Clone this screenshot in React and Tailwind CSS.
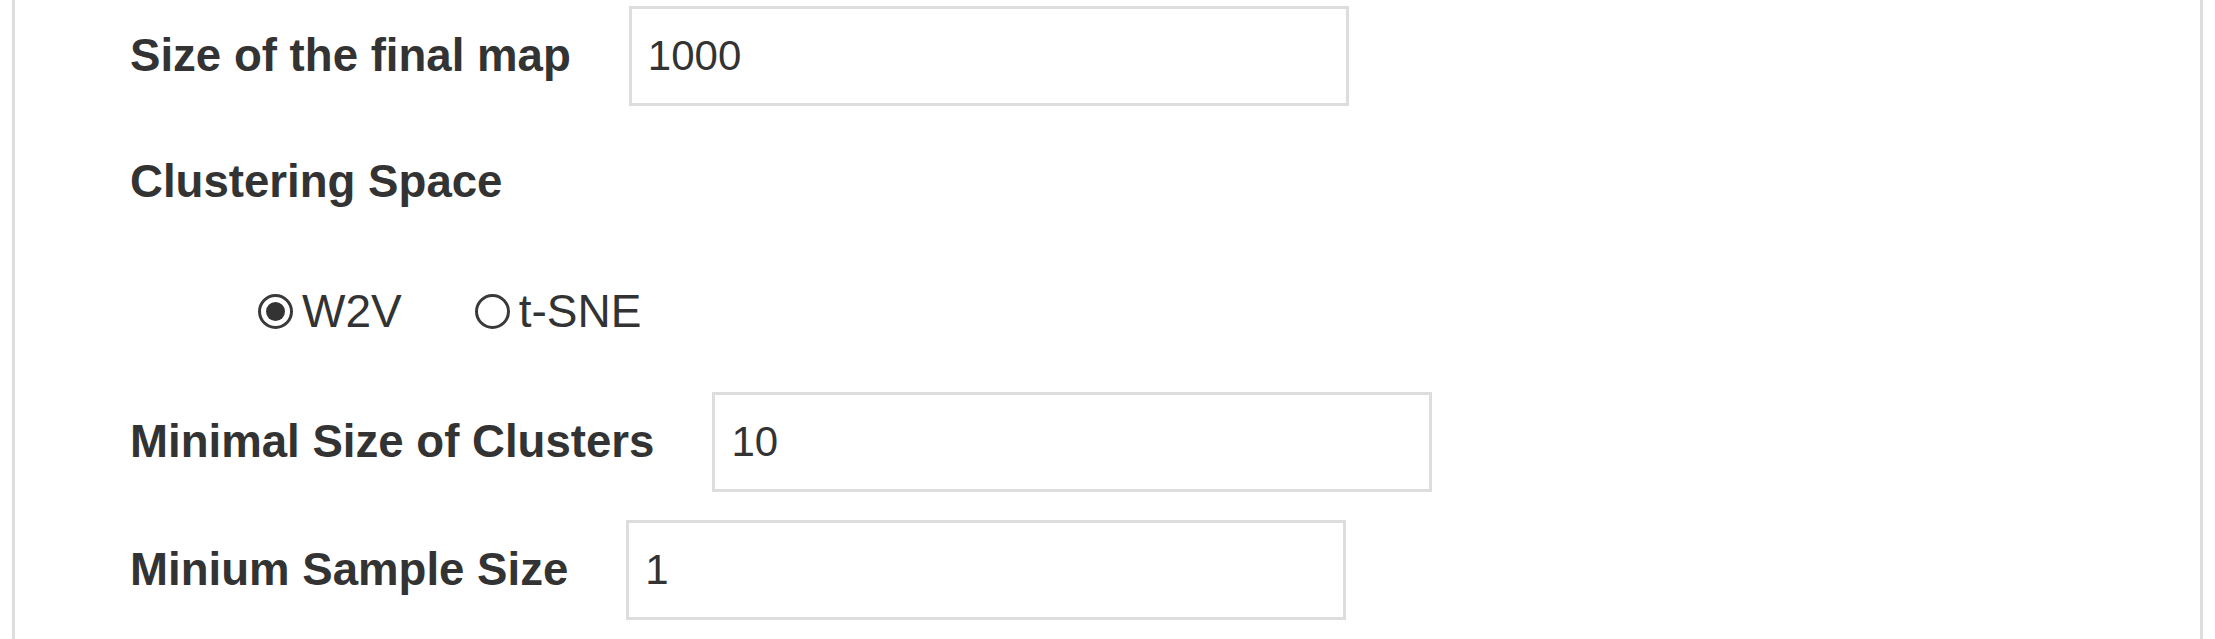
import React from "react";

const font = { fontFamily: '"Liberation Sans", Arial, sans-serif' };

function Field({ label, value }) {
  return (
    <div className="flex items-center">
      <span className="text-[45.6px] leading-[52px] font-bold text-[#333]">{label}</span>
      <input
        readOnly
        defaultValue={value}
        className="ml-[58px] w-[720px] h-[100px] border-[3px] border-[#dddddd] bg-white px-[16px] text-[42px] text-[#333] outline-none"
        style={font}
      />
    </div>
  );
}

function Radio({ checked, label }) {
  return (
    <label className="flex items-center">
      <span className="flex h-[35px] w-[35px] items-center justify-center rounded-full border-[3px] border-[#3a3a3a]">
        {checked && <span className="h-[19px] w-[19px] rounded-full bg-[#333]" />}
      </span>
      <span className="ml-[9px] text-[46px] leading-[52px] text-[#333]">{label}</span>
    </label>
  );
}

export default function App() {
  return (
    <div className="min-h-screen bg-white" style={font}>
      <div className="mx-[12px] min-h-screen border-x-[3px] border-[#dddddd] pl-[115px] pt-[6px]">
        <Field label="Size of the final map" value="1000" />
        <div className="mt-[50px] text-[45.6px] leading-[52px] font-bold text-[#333]">Clustering Space</div>
        <div className="mt-[77px] flex items-center gap-[73px] pl-[128px]">
          <Radio checked label="W2V" />
          <Radio label="t-SNE" />
        </div>
        <div className="mt-[55px]">
          <Field label="Minimal Size of Clusters" value="10" />
        </div>
        <div className="mt-[28px]">
          <Field label="Minium Sample Size" value="1" />
        </div>
      </div>
    </div>
  );
}
